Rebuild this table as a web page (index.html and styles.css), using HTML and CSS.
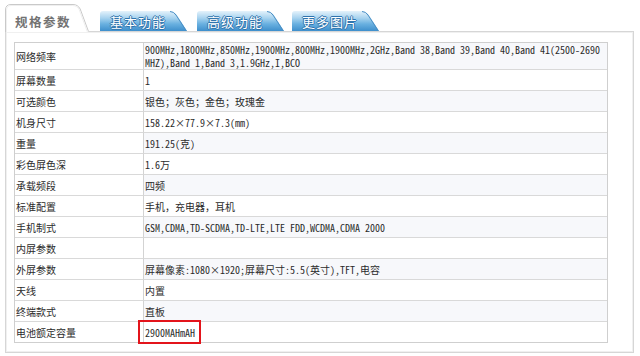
FILE: index.html
```html
<!DOCTYPE html>
<html lang="zh-CN">
<head>
<meta charset="utf-8">
<title>规格参数</title>
<link rel="stylesheet" href="styles.css">
</head>
<body>
<div class="wrap">
  <div class="tabs">
    <div class="tab tab-active">
      <svg class="tab-bg" width="84" height="28" viewBox="0 0 84 28">
        <path d="M0,28.5 V6 Q0,0 6,0 H68 Q73,0 75.5,4.5 L84,28.5 Z" fill="#fff"/>
        <path d="M0.5,28 V6 Q0.5,0.5 6,0.5 H68 Q72.8,0.5 75.2,5 L83.5,27.5" fill="none" stroke="#c9c9c9"/>
        <path d="M1.5,28 V6.2 Q1.5,1.5 6,1.5 H67.6 Q72,1.5 74.2,5.6 L82.4,28" fill="none" stroke="#efefef"/>
      </svg>
      <span class="tab-label">规格参数</span>
    </div>
    <div class="tab tab-blue t1">
      <svg class="tab-bg" width="87" height="20" viewBox="0 0 87 20">
        <defs>
          <linearGradient id="gb1" x1="0" y1="0" x2="0" y2="1">
            <stop offset="0" stop-color="#e4f2fb"/>
            <stop offset="0.35" stop-color="#a8d3ef"/>
            <stop offset="0.65" stop-color="#69b0e0"/>
            <stop offset="1" stop-color="#3e8fcc"/>
          </linearGradient>
        </defs>
        <path d="M0,20 V3 Q0,0 3,0 H70 Q74,0 76.5,3.6 L87,20 Z" fill="url(#gb1)"/>
        <path d="M70,0.5 Q73.6,0.5 76,4 L86.2,19.8" fill="none" stroke="#4b8fc4" stroke-width="1"/>
      </svg>
      <span class="tab-label">基本功能</span>
    </div>
    <div class="tab tab-blue t2">
      <svg class="tab-bg" width="87" height="20" viewBox="0 0 87 20">
        <defs>
          <linearGradient id="gb2" x1="0" y1="0" x2="0" y2="1">
            <stop offset="0" stop-color="#e4f2fb"/>
            <stop offset="0.35" stop-color="#a8d3ef"/>
            <stop offset="0.65" stop-color="#69b0e0"/>
            <stop offset="1" stop-color="#3e8fcc"/>
          </linearGradient>
        </defs>
        <path d="M0,20 V3 Q0,0 3,0 H70 Q74,0 76.5,3.6 L87,20 Z" fill="url(#gb2)"/>
        <path d="M70,0.5 Q73.6,0.5 76,4 L86.2,19.8" fill="none" stroke="#4b8fc4" stroke-width="1"/>
      </svg>
      <span class="tab-label">高级功能</span>
    </div>
    <div class="tab tab-blue t3">
      <svg class="tab-bg" width="87" height="20" viewBox="0 0 87 20">
        <defs>
          <linearGradient id="gb3" x1="0" y1="0" x2="0" y2="1">
            <stop offset="0" stop-color="#e4f2fb"/>
            <stop offset="0.35" stop-color="#a8d3ef"/>
            <stop offset="0.65" stop-color="#69b0e0"/>
            <stop offset="1" stop-color="#3e8fcc"/>
          </linearGradient>
        </defs>
        <path d="M0,20 V3 Q0,0 3,0 H70 Q74,0 76.5,3.6 L87,20 Z" fill="url(#gb3)"/>
        <path d="M70,0.5 Q73.6,0.5 76,4 L86.2,19.8" fill="none" stroke="#4b8fc4" stroke-width="1"/>
      </svg>
      <span class="tab-label">更多图片</span>
    </div>
  </div>
  <div class="panel">
    <table class="spec">
      <tr class="row-tall"><th>网络频率</th><td class="multi">900MHz,1800MHz,850MHz,1900MHz,800MHz,1900MHz,2GHz,Band 38,Band 39,Band 40,Band 41(2500-2690MHZ),Band 1,Band 3,1.9GHz,I,BCO</td></tr>
      <tr><th>屏幕数量</th><td>1</td></tr>
      <tr><th>可选颜色</th><td>银色；灰色；金色；玫瑰金</td></tr>
      <tr><th>机身尺寸</th><td>158.22×77.9×7.3(mm)</td></tr>
      <tr><th>重量</th><td>191.25(克)</td></tr>
      <tr><th>彩色屏色深</th><td>1.6万</td></tr>
      <tr><th>承载频段</th><td>四频</td></tr>
      <tr><th>标准配置</th><td>手机，充电器，耳机</td></tr>
      <tr><th>手机制式</th><td>GSM,CDMA,TD-SCDMA,TD-LTE,LTE FDD,WCDMA,CDMA 2000</td></tr>
      <tr><th>内屏参数</th><td></td></tr>
      <tr><th>外屏参数</th><td>屏幕像素:1080×1920;屏幕尺寸:5.5(英寸),TFT,电容</td></tr>
      <tr><th>天线</th><td>内置</td></tr>
      <tr><th>终端款式</th><td>直板</td></tr>
      <tr><th>电池额定容量</th><td class="marked">2900MAHmAH<span class="mark"></span></td></tr>
    </table>
  </div>
</div>
</body>
</html>
```

FILE: styles.css
```css
* {
  box-sizing: border-box;
}

body {
  margin: 0;
  background: #fff;
  font-family: "Noto Sans CJK SC", sans-serif;
}

.wrap {
  width: 640px;
  padding: 4px 0 0 5px;
}

.tabs {
  display: flex;
  align-items: flex-end;
  height: 27px;
}

.tab {
  position: relative;
  display: flex;
  align-items: center;
}

.tab-bg {
  position: absolute;
  left: 0;
  top: 0;
}

.tab-label {
  position: relative;
  white-space: nowrap;
}

.tab-active {
  width: 84px;
  height: 28px;
  margin-bottom: -1px;
  z-index: 1;
  padding: 6px 0 0 10px;
}

.tab-active .tab-label {
  font-size: 12.5px;
  font-weight: bold;
  color: #727272;
  letter-spacing: 1.5px;
}

.tab-blue {
  width: 87px;
  height: 20px;
  padding: 1px 0 0 10px;
}

.tab-blue .tab-label {
  font-size: 13px;
  color: #fff;
  letter-spacing: 1px;
  text-shadow: 1px 0 0 #2f74ad, -1px 0 0 #2f74ad, 0 1px 0 #2f74ad, 0 -1px 0 #2f74ad;
}

.t1 { margin-left: 11px; }
.t2 { margin-left: 10px; }
.t3 { margin-left: 8px; }

.panel {
  width: 629px;
  border: 1px solid #d6d6d6;
  box-shadow: inset 0 0 0 1px #f0f0f0;
  padding: 10px 0 9px 8px;
}

.spec {
  width: 594px;
  border: 1px solid #cfcfcf;
  border-collapse: separate;
  border-spacing: 0;
  font-family: "Noto Sans Mono CJK SC", "Noto Sans CJK SC", monospace;
  font-size: 10px;
  color: #2b2b2b;
}

.spec th,
.spec td {
  height: 21px;
  border-bottom: 1px solid #d9d9d9;
  text-align: left;
  font-weight: normal;
  vertical-align: middle;
  line-height: 13px;
}

.spec th {
  width: 128px;
  padding: 0 0 0 1px;
  background: #fff;
}

.spec td {
  padding: 0 5px 0 1px;
  border-left: 1px solid #d3d3d3;
}

.spec tr:nth-child(odd) td {
  background: #f7f8fb;
}

.spec tr:last-child th,
.spec tr:last-child td {
  border-bottom: 0;
  height: 20px;
}

.spec .row-tall th,
.spec .row-tall td {
  height: 26px;
}

.multi {
  word-break: break-all;
}

.marked {
  position: relative;
}

.mark {
  position: absolute;
  left: -6px;
  top: -2px;
  width: 63px;
  height: 24px;
  border: 2px solid #e3141b;
}
```
